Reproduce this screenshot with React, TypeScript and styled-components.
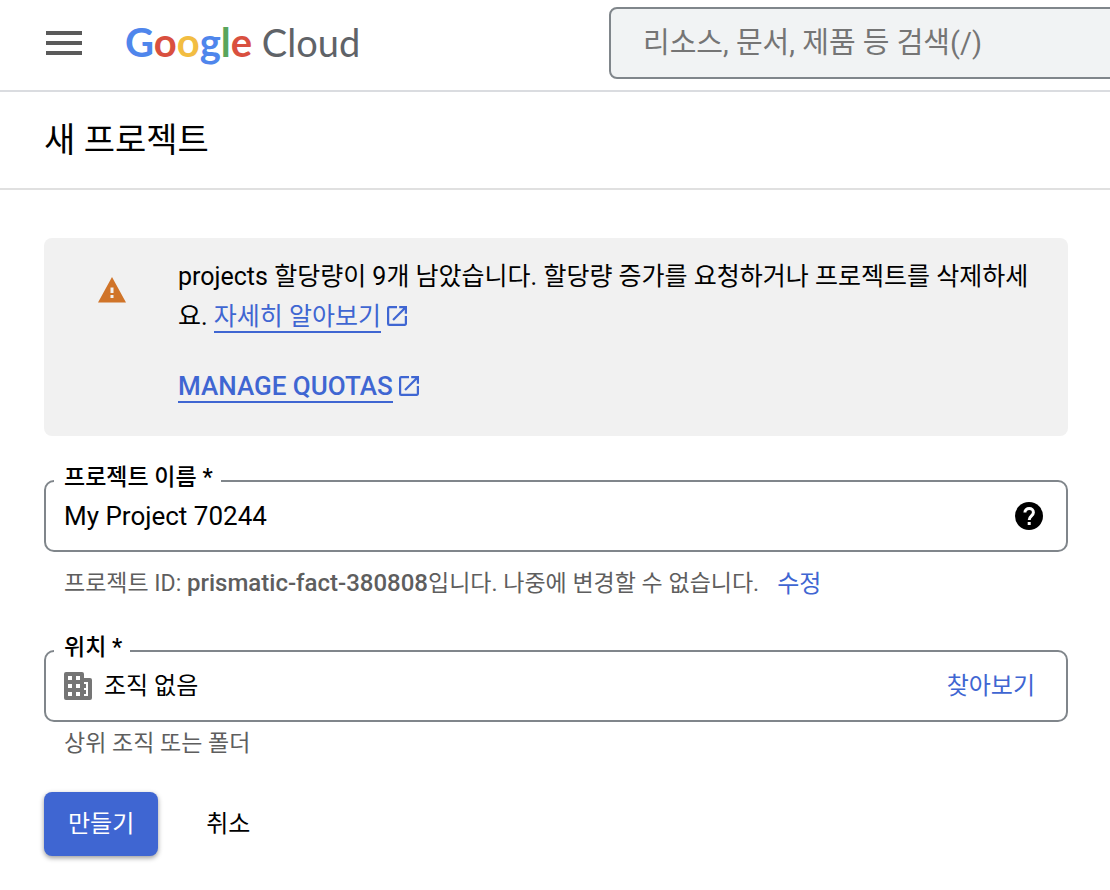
import React from 'react';
import styled, { createGlobalStyle } from 'styled-components';

const GlobalStyle = createGlobalStyle`
  *, *::before, *::after { box-sizing: border-box; }
  body {
    margin: 0;
    background: #fff;
    color: #000;
    font-family: Roboto, "Noto Sans CJK KR", sans-serif;
    font-size: 24px;
    line-height: 40px;
  }
  button, input { font: inherit; color: inherit; }
`;

const TopBar = styled.header`
  display: flex;
  align-items: center;
  height: 92px;
  padding-left: 40px;
  padding-bottom: 4px;
  border-bottom: 2px solid #dadce0;
  overflow: hidden;
`;

const IconButton = styled.button`
  display: flex;
  flex: none;
  padding: 0;
  border: 0;
  background: none;
  color: ${(p) => p.color};
  cursor: pointer;
`;

const Logo = styled.a`
  flex: none;
  width: 484px;
  padding: 0 0 2px 37px;
  font-family: Lato, sans-serif;
  font-size: 38px;
  line-height: 48px;
  color: #5f6368;
  text-decoration: none;
  white-space: nowrap;
`;

const LogoLetter = styled.span<{ $color: string }>`
  color: ${(p) => p.$color};
  font-size: 40px;
  font-weight: 700;
`;

const SearchInput = styled.input`
  flex: 1 0 560px;
  height: 72px;
  margin-left: 37px;
  padding: 0 32px;
  border: 2px solid #80868b;
  border-radius: 8px;
  background: #f1f3f4;
  font-size: 29px;
  &::placeholder { color: #757575; opacity: 1; }
`;

const TitleBar = styled.div`
  padding: 24px 44px 24px;
  border-bottom: 2px solid #e0e0e0;
`;

const Title = styled.h1`
  margin: 0;
  font-size: 34px;
  font-weight: 400;
  line-height: 48px;
`;

const Content = styled.main`
  padding: 48px 42px 32px 44px;
`;

const Notice = styled.section`
  display: flex;
  align-items: flex-start;
  gap: 52px;
  padding: 19px 36px 30px 54px;
  border-radius: 8px;
  background: #f1f1f1;
`;

const NoticeIcon = styled.svg`
  flex: none;
  width: 28px;
  height: 26px;
  margin-top: 20px;
  fill: #d07429;
`;

const NoticeText = styled.p`
  margin: 0 0 29px;
  font-size: 25px;
`;

const NoticeAction = styled.div`
  font-size: 26px;
  font-weight: 500;
`;

const TextLink = styled.a`
  color: #3f66d2;
  text-decoration: none;
  white-space: nowrap;
`;

const Underlined = styled.span`
  border-bottom: 2px solid #3f66d2;
`;

const ExternalSvg = styled.svg`
  width: 20px;
  height: 20px;
  margin-left: 6px;
  vertical-align: -1px;
  fill: currentColor;
`;

const Field = styled.fieldset`
  min-width: 0;
  margin: 0;
  padding: 0 23px 14px 8px;
  border: 2px solid #80868b;
  border-radius: 10px;
`;

const Legend = styled.legend`
  padding: 0 8px 6px 10px;
  font-size: 23px;
  font-weight: 500;
  line-height: 24px;
`;

const FieldRow = styled.div`
  display: flex;
  align-items: center;
  height: 40px;
  padding-left: 10px;
`;

const FieldInput = styled.input<{ $size: number }>`
  flex: 1;
  min-width: 0;
  height: 40px;
  padding: 0;
  border: 0;
  background: none;
  font-size: ${(p) => p.$size}px;
  outline: none;
`;

const BuildingSvg = styled.svg`
  flex: none;
  width: 28px;
  height: 28px;
  margin-right: 12px;
  fill: #757575;
`;

const TextButton = styled.button`
  padding: 0 8px;
  border: 0;
  background: none;
  color: ${(p) => p.color};
  font-size: 24px;
  cursor: pointer;
`;

const Hint = styled.div`
  display: flex;
  gap: 10px;
  height: 40px;
  padding-left: 20px;
  color: #5e5e5e;
  font-size: 23px;
`;

const ProjectId = styled.strong`
  font-size: 24px;
  font-weight: 500;
  line-height: 24px;
`;

const Form = styled.form`
  display: flex;
  flex-direction: column;
  padding-top: 30px;
`;

const Group = styled.div`
  padding-bottom: 32px;
  ${Hint} { margin-top: 12px; }
  & + & { padding-bottom: 28px; }
  & + & ${Hint} { margin-top: 2px; }
`;

const Actions = styled.div`
  display: flex;
  align-items: center;
  gap: 40px;
`;

const SubmitButton = styled.button`
  height: 64px;
  padding: 0 24px;
  border: 0;
  border-radius: 8px;
  background: #3f66d2;
  color: #fff;
  box-shadow: 0 2px 5px rgba(0, 0, 0, 0.4);
  cursor: pointer;
`;

const ExternalIcon = () => (
  <ExternalSvg viewBox="3 3 18 18" aria-hidden="true">
    <path d="M19 19H5V5h7V3H5a2 2 0 0 0-2 2v14a2 2 0 0 0 2 2h14c1.1 0 2-.9 2-2v-7h-2v7zM14 3v2h3.590l-9.830 9.830 1.410 1.410L19 6.410V10h2V3h-7z" />
  </ExternalSvg>
);

const HelpIcon = () => (
  <svg width="28" height="28" viewBox="0 0 28 28" aria-hidden="true">
    <circle cx="14" cy="14" r="14" fill="currentColor" />
    <path
      d="M9.900 10.600C9.900 8 11.800 6.600 14.200 6.600s4.200 1.500 4.200 3.900c0 3.300-4.200 3.500-4.200 7.500"
      fill="none"
      stroke="#fff"
      strokeWidth="3"
    />
    <rect x="12.700" y="20" width="3" height="3" fill="#fff" />
  </svg>
);

const logoColors = ['#4f86ec', '#d9503f', '#f2bd42', '#4f86ec', '#58a55c', '#d9503f'];

export default function App() {
  return (
    <>
      <GlobalStyle />
      <TopBar>
        <IconButton type="button" color="#5a5a5a" aria-label="탐색 메뉴">
          <svg width="48" height="48" viewBox="0 0 24 24" fill="currentColor" aria-hidden="true">
            <path d="M3 18h18v-2H3v2zm0-5h18v-2H3v2zm0-7v2h18V6H3z" />
          </svg>
        </IconButton>
        <Logo href="#">
          {'Google'.split('').map((c, i) => (
            <LogoLetter key={i} $color={logoColors[i]}>{c}</LogoLetter>
          ))}{' '}
          Cloud
        </Logo>
        <SearchInput type="search" placeholder="리소스, 문서, 제품 등 검색(/)" aria-label="검색" />
      </TopBar>
      <TitleBar>
        <Title>새 프로젝트</Title>
      </TitleBar>
      <Content>
        <Notice>
          <NoticeIcon viewBox="0 0 28 26" aria-hidden="true">
            <path fillRule="evenodd" d="M14 0l14 25.500H0zM12.500 10.500v5.500h3v-5.500zM12.500 18v3h3v-3z" />
          </NoticeIcon>
          <div>
            <NoticeText>
              projects 할당량이 9개 남았습니다. 할당량 증가를 요청하거나 프로젝트를 삭제하세요.{' '}
              <TextLink href="#"><Underlined>자세히 알아보기</Underlined><ExternalIcon /></TextLink>
            </NoticeText>
            <NoticeAction>
              <TextLink href="#"><Underlined>MANAGE QUOTAS</Underlined><ExternalIcon /></TextLink>
            </NoticeAction>
          </div>
        </Notice>
        <Form>
          <Group>
            <Field>
              <Legend><label htmlFor="project-name">프로젝트 이름 *</label></Legend>
              <FieldRow>
                <FieldInput id="project-name" $size={26} defaultValue="My Project 70244" />
                <IconButton type="button" color="#000" aria-label="도움말">
                  <HelpIcon />
                </IconButton>
              </FieldRow>
            </Field>
            <Hint>
              <span>프로젝트 ID: <ProjectId>prismatic-fact-380808</ProjectId>입니다. 나중에 변경할 수 없습니다.</span>
              <TextButton type="button" color="#3f66d2">수정</TextButton>
            </Hint>
          </Group>
          <Group>
            <Field>
              <Legend><label htmlFor="location">위치 *</label></Legend>
              <FieldRow>
                <BuildingSvg viewBox="0 0 28 28" aria-hidden="true">
                  <path fillRule="evenodd" d="M2 0h16a2 2 0 0 1 2 2v4h6a2 2 0 0 1 2 2v18a2 2 0 0 1-2 2H2a2 2 0 0 1-2-2V2a2 2 0 0 1 2-2zM4 4v4h4V4zM12 4v4h4V4zM4 12v4h4v-4zM12 12v4h4v-4zM4 20v4h4v-4zM12 20v4h4v-4zM20 10v2h2v4h-2v2h2v4h-2v2h4V10z" />
                </BuildingSvg>
                <FieldInput id="location" $size={24} defaultValue="조직 없음" />
                <TextButton type="button" color="#3f66d2">찾아보기</TextButton>
              </FieldRow>
            </Field>
            <Hint>상위 조직 또는 폴더</Hint>
          </Group>
          <Actions>
            <SubmitButton type="button">만들기</SubmitButton>
            <TextButton type="button" color="#000">취소</TextButton>
          </Actions>
        </Form>
      </Content>
    </>
  );
}
